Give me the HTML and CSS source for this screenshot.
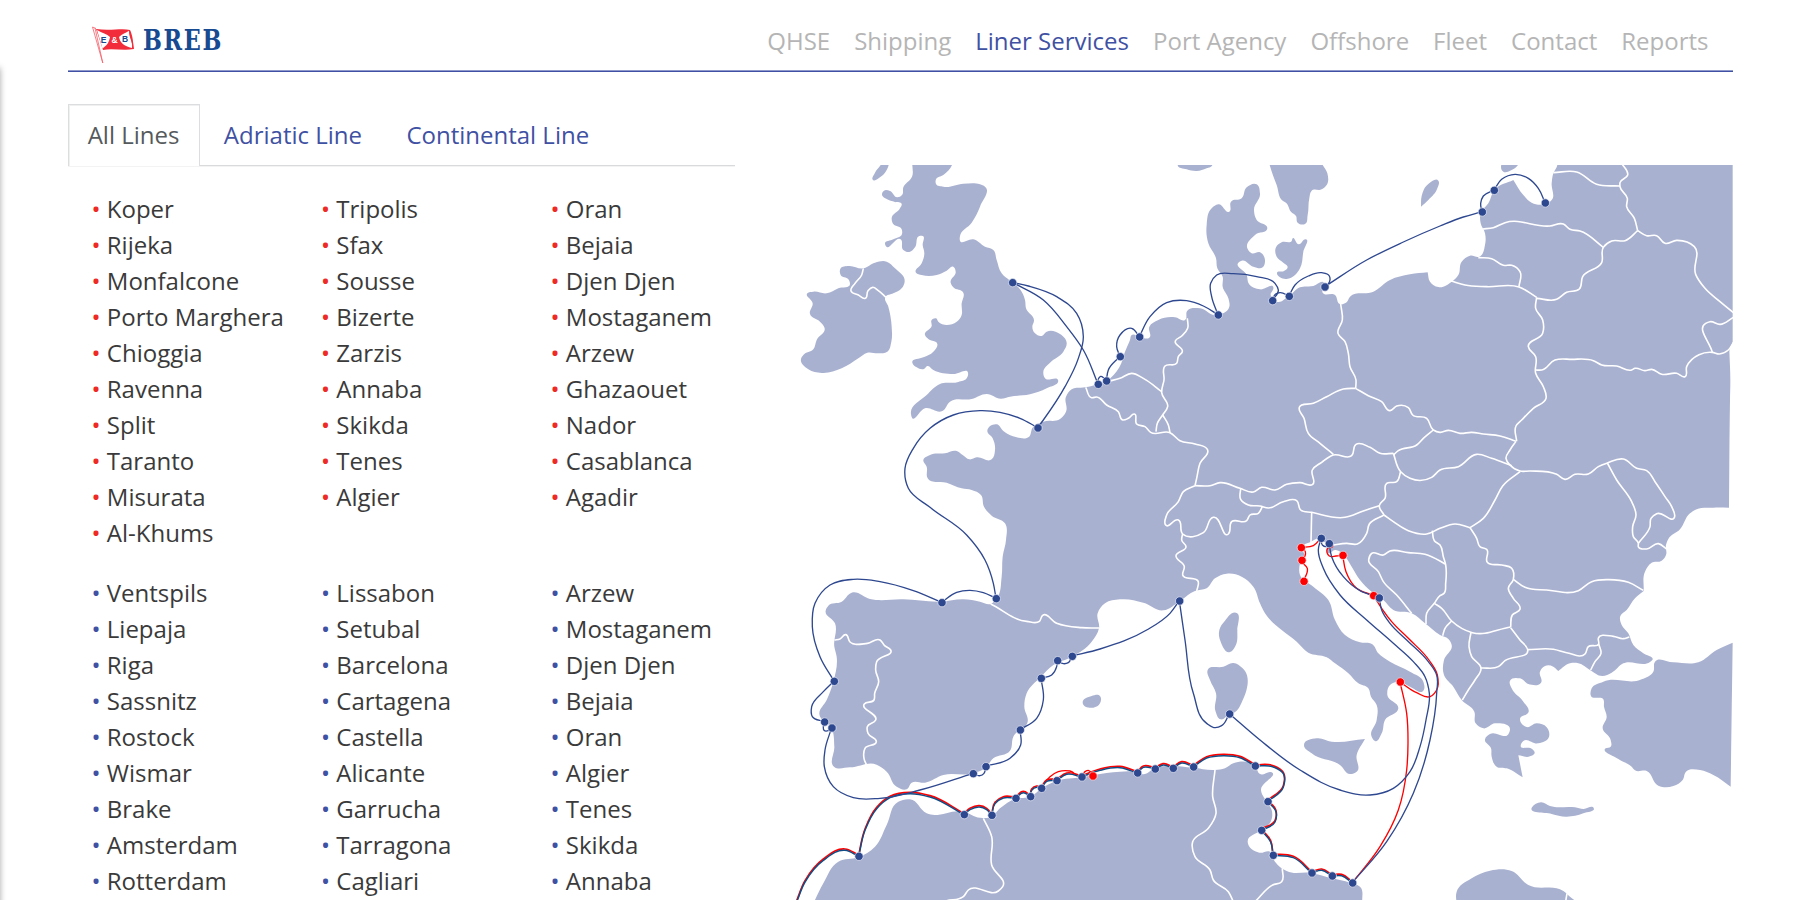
FILE: index.html
```html
<!DOCTYPE html>
<html lang="en">
<head>
<meta charset="utf-8">
<title>BREB – Liner Services</title>
<link rel="stylesheet" href="styles.css">
</head>
<body>
<div class="edge-shadow"></div>
<div class="page">
  <header class="header">
    <a class="logo">
      <svg class="logo-svg" viewBox="0 0 150 40" role="img" aria-label="E and B, BREB">
        <path class="flag-red" d="M4 3C18 5 30 2 38 4C41 10 41 17 42 23C32 25 20 22 11 24Z"/>
        <path class="flag-white" d="M5 4C10 7 15 8 18 11C17 17 15 19 10.500 22.500Z"/>
        <path class="flag-white" d="M37 4.800C34 7 30 8 27 11C28 17 32 20 40 22C41 16 37 12 37 4.800Z"/>
        <path class="flag-line" d="M37.500 4.500C38 11 41 15 41 22.500"/>
        <path class="flag-pole" d="M.500 1L10.800 37M3 2L10.800 37M.500 1L4 2.500"/>
        <text class="flag-text blue" x="8.800" y="16.500">E</text>
        <text class="flag-text white" x="19.500" y="16.500">&amp;</text>
        <text class="flag-text blue" x="30" y="16">B</text>
        <text class="brand" x="51" y="23.500" textLength="80" lengthAdjust="spacingAndGlyphs">BREB</text>
      </svg>
    </a>
    <nav class="nav">
      <a>QHSE</a><a>Shipping</a><a class="current">Liner Services</a><a>Port Agency</a><a>Offshore</a><a>Fleet</a><a>Contact</a><a>Reports</a>
    </nav>
  </header>
  <main class="content">
    <section class="lines">
      <div class="tabs">
        <a class="tab active">All Lines</a><a class="tab">Adriatic Line</a><a class="tab">Continental Line</a>
      </div>
      <div class="ports red">
        <ul><li>Koper</li><li>Rijeka</li><li>Monfalcone</li><li>Porto Marghera</li><li>Chioggia</li><li>Ravenna</li><li>Split</li><li>Taranto</li><li>Misurata</li><li>Al-Khums</li></ul>
        <ul><li>Tripolis</li><li>Sfax</li><li>Sousse</li><li>Bizerte</li><li>Zarzis</li><li>Annaba</li><li>Skikda</li><li>Tenes</li><li>Algier</li></ul>
        <ul><li>Oran</li><li>Bejaia</li><li>Djen Djen</li><li>Mostaganem</li><li>Arzew</li><li>Ghazaouet</li><li>Nador</li><li>Casablanca</li><li>Agadir</li></ul>
      </div>
      <div class="ports blue">
        <ul><li>Ventspils</li><li>Liepaja</li><li>Riga</li><li>Sassnitz</li><li>Rostock</li><li>Wismar</li><li>Brake</li><li>Amsterdam</li><li>Rotterdam</li></ul>
        <ul><li>Lissabon</li><li>Setubal</li><li>Barcelona</li><li>Cartagena</li><li>Castella</li><li>Alicante</li><li>Garrucha</li><li>Tarragona</li><li>Cagliari</li></ul>
        <ul><li>Arzew</li><li>Mostaganem</li><li>Djen Djen</li><li>Bejaia</li><li>Oran</li><li>Algier</li><li>Tenes</li><li>Skikda</li><li>Annaba</li></ul>
      </div>
    </section>
    <svg class="map" viewBox="0 15 2859 2205">
      <g id="land"></g><g id="borders"></g><g id="red-routes"></g><g id="blue-routes"></g><g id="dots"></g>
    </svg>
  </main>
</div>
<script src="map.js"></script>
</body>
</html>
```

FILE: styles.css
```css
* { box-sizing: border-box; }
body { margin: 0; height: 900px; overflow: hidden; background: #fff; color: #3a3a3a; font: 24px/36px "Open Sans", sans-serif; }
.edge-shadow { position: absolute; left: -10px; top: 68px; width: 10px; height: 860px; box-shadow: 0 0 6px rgba(0, 0, 0, .35); }
.page { width: 1665px; margin-left: 67.500px; }
.header { height: 72px; display: flex; justify-content: space-between; border-bottom: 1px solid #4050a4; box-shadow: inset 0 -1px #8f9acb; padding: 0 24px; }
.logo { display: block; padding-top: 26px; }
.logo-svg { display: block; width: 150px; height: 40px; overflow: visible; }
.flag-red { fill: #f22c3a; }
.flag-white { fill: #fff; }
.flag-line { fill: none; stroke: #f22c3a; stroke-width: .8; }
.flag-pole { fill: none; stroke: #f4606a; stroke-width: .8; }
.flag-text { font: bold 8.500px "Liberation Sans", sans-serif; }
.flag-text.blue { fill: #174a90; }
.flag-text.white { fill: #fff; }
.brand { font: bold 27px "DejaVu Serif", serif; fill: #174a90; letter-spacing: 2px; }
.nav { display: flex; gap: 24px; padding-top: 23px; color: #b5b5b5; }
.nav .current { color: #3f51a3; }
.content { display: flex; justify-content: space-between; padding-top: 32px; }
.lines { width: 667px; flex: none; }
.tabs { display: flex; height: 62px; border-bottom: 1px solid #d9dadb; box-shadow: 0 1px #f3f3f3; }
.tab { height: 62px; padding: 12px 19.200px 0; margin-right: 4px; border: 1px solid transparent; border-bottom: 0; color: #3f51a3; }
.tab.active { border-color: #dcddde; box-shadow: inset 0 1px #f0f0f0, inset 1px 0 #f0f0f0; background: #fff; color: #555a5c; }
.ports { display: grid; grid-template-columns: repeat(3, 229.500px); padding: 25px 0 0 24px; }
.ports.blue { padding-top: 24px; }
.ports ul { list-style: none; margin: 0; padding: 0; }
.ports li { white-space: nowrap; }
.ports li::before { content: "•"; display: inline-block; width: 15.300px; }
.red li::before { color: #ee2a24; }
.blue li::before { color: #3f51a3; }
.map { display: block; flex: none; width: 953px; height: 735px; margin-top: 61px; }
.land { fill: #a9b1d0; }
.border { fill: none; stroke: #fff; stroke-width: 4.800; stroke-linejoin: round; }
.route { fill: none; stroke: #2e4890; stroke-width: 4; stroke-linecap: round; }
.route.coast { stroke: #124c84; stroke-width: 4.500; }
.route.red { stroke: #f00; }
.route.red.coast { stroke: #f00; stroke-width: 5; }
.dot { fill: #2e4890; stroke: #eef0f7; stroke-width: 2; }
.dot.red { fill: #f00; }
```

FILE: map.js
```javascript
// Builds a smooth path through "x,y x,y ..." points; a repeated point makes a corner.
function parse(s, dx, dy) {
  return s.trim().split(/\s+/).map(function (p) {
    var a = p.split(',');
    return [+a[0] + (dx || 0), +a[1] + (dy || 0)];
  });
}
function smooth(pts, closed) {
  var n = pts.length, r = function (v) { return v.toFixed(1); };
  var at = function (i) { return closed ? pts[(i + n) % n] : pts[Math.max(0, Math.min(n - 1, i))]; };
  // Tangent at b: the shorter neighbouring segment has the larger weight.
  var tangent = function (a, b, c) {
    var l1 = Math.hypot(b[0] - a[0], b[1] - a[1]), l2 = Math.hypot(c[0] - b[0], c[1] - b[1]);
    var w1 = l1 ? 1 / (l1 * l1) : 0, w2 = l2 ? 1 / (l2 * l2) : 0;
    var x = (b[0] - a[0]) * w1 + (c[0] - b[0]) * w2, y = (b[1] - a[1]) * w1 + (c[1] - b[1]) * w2;
    var d = Math.hypot(x, y) || 1;
    return [x / d, y / d];
  };
  var d = 'M' + pts[0], end = closed ? n : n - 1;
  for (var i = 0; i < end; i++) {
    var p = at(i), q = at(i + 1), len = Math.hypot(q[0] - p[0], q[1] - p[1]) * 0.36;
    if (!len) continue;
    var u = tangent(at(i - 1), p, q), v = tangent(p, q, at(i + 2));
    d += 'C' + r(p[0] + u[0] * len) + ' ' + r(p[1] + u[1] * len) + ' ' + r(q[0] - v[0] * len) + ' ' + r(q[1] - v[1] * len) + ' ' + q[0] + ' ' + q[1];
  }
  return d + (closed ? 'Z' : '');
}
function add(id, tag, attrs) {
  var e = document.createElementNS('http://www.w3.org/2000/svg', tag);
  for (var k in attrs) e.setAttribute(k, attrs[k]);
  document.getElementById(id).appendChild(e);
}
function draw(id, cls, s, closed, dx, dy) {
  add(id, 'path', { 'class': cls, d: smooth(parse(s, dx, dy), closed) });
}

var land = [
  // Great Britain
  '400,0 396,50 370,82 366,105 352,112 330,93 312,92 306,103 320,117 345,126 365,132 360,145 335,175 338,190 365,208 366,222 340,238 315,252 318,259 362,238 370,270 388,276 405,262 418,228 428,228 428,255 433,280 425,310 408,338 425,345 470,345 500,332 520,320 527,335 512,368 520,382 550,398 545,430 543,470 530,485 475,485 468,475 455,480 455,498 435,525 445,537 472,552 460,575 430,592 397,608 410,622 432,627 442,618 460,630 520,642 564,638 560,655 535,666 480,672 440,705 393,762 396,773 435,745 487,753 510,725 575,717 620,702 663,716 690,710 750,703 800,685 834,660 795,655 790,635 810,608 850,575 860,548 840,522 800,515 785,528 765,520 757,500 762,482 738,445 735,420 720,388 690,362 665,340 650,300 640,270 615,260 580,238 540,242 540,228 575,188 600,140 615,80 600,73 550,71 490,80 468,72 468,58 490,45 516,15 520,0',
  '302,15 285,38 279,60 300,52 320,30 326,15 326,0 310,0',
  // Ireland
  '316,412 325,440 335,500 334,545 322,575 295,580 262,578 235,595 185,625 125,639 85,628 63,597 70,585 100,568 110,540 134,505 120,485 90,462 98,430 82,400 100,395 140,400 175,385 210,372 205,358 182,345 182,325 205,318 250,325 285,308 320,305 345,325 374,365 365,385 340,400',
  // Scandinavia and the Baltic islands
  '1193,15 1220,28 1250,33 1280,25 1297,15 1290,0 1200,0',
  '1465,0 1469,15 1490,75 1508,122 1518,128 1533,155 1548,168 1553,188 1575,192 1583,165 1588,115 1595,92 1625,88 1640,75 1642,40 1628,15 1620,0',
  '1923,140 1923,140 1925,108 1945,72 1975,62 1972,85 1945,120',
  '2170,0 2170,35 2195,30 2214,15 2220,0',
  '1538,235 1556,253 1577,238 1570,275 1560,325 1545,345 1520,357 1500,352 1491,338 1512,333 1523,322 1510,308 1490,290 1488,262 1505,247 1535,243',
  // Continental Europe
  '2858,0 2858,0 2858,545 2858,545 2848,572 2848,572 2851,660 2850,720 2847,1043 2847,1043 2800,1043 2745,1050 2730,1060 2700,1108 2665,1137 2658,1155 2658,1185 2645,1202 2615,1208 2595,1235 2591,1293 2591,1293 2565,1315 2540,1350 2521,1368 2525,1395 2545,1420 2560,1455 2590,1480 2617,1500 2610,1506 2530,1510 2495,1538 2467,1548 2430,1530 2395,1510 2370,1510 2335,1533 2335,1533 2320,1520 2295,1518 2280,1535 2283,1568 2245,1572 2220,1555 2190,1562 2195,1585 2230,1625 2246,1655 2220,1678 2240,1701 2270,1690 2300,1702 2307,1730 2275,1750 2230,1743 2222,1758 2255,1766 2264,1778 2250,1789 2215,1786 2215,1786 2228,1852 2228,1852 2180,1825 2150,1820 2135,1790 2133,1765 2115,1738 2130,1722 2185,1723 2190,1708 2145,1690 2110,1705 2087,1690 2083,1655 2045,1620 2020,1580 1992,1545 1992,1500 2015,1455 2005,1437 1980,1425 1935,1390 1895,1360 1840,1350 1810,1320 1775,1295 1740,1260 1715,1220 1695,1190 1665,1170 1645,1180 1637,1150 1622,1136 1590,1147 1563,1165 1572,1180 1560,1210 1560,1245 1600,1280 1645,1320 1665,1380 1695,1425 1740,1447 1777,1453 1795,1480 1830,1505 1890,1535 1930,1565 1930,1592 1890,1580 1858,1565 1830,1575 1822,1605 1855,1645 1815,1680 1805,1720 1785,1743 1775,1730 1790,1680 1790,1635 1773,1610 1765,1585 1735,1570 1705,1540 1665,1510 1640,1492 1585,1478 1550,1445 1505,1410 1455,1360 1440,1330 1420,1280 1385,1250 1340,1241 1305,1255 1280,1285 1245,1293 1200,1323 1150,1351 1090,1328 1020,1318 975,1330 953,1360 957,1405 935,1445 876,1490 820,1515 783,1550 740,1600 733,1640 743,1685 700,1730 690,1772 640,1795 615,1825 580,1840 490,1845 435,1868 395,1868 380,1888 350,1880 320,1835 290,1814 210,1822 162,1820 163,1760 155,1705 118,1662 140,1620 160,1565 170,1490 163,1460 165,1390 137,1352 145,1337 185,1325 215,1298 270,1317 370,1318 485,1325 550,1318 600,1325 632,1332 650,1315 665,1250 668,1190 678,1140 675,1090 635,1067 612,1040 603,1005 575,990 545,985 500,968 443,955 440,920 430,900 450,885 495,880 530,873 548,885 568,898 590,892 635,898 645,870 638,835 622,812 650,793 670,813 710,832 745,832 760,800 790,785 840,777 858,755 858,710 875,688 915,682 955,672 980,662 1018,622 1035,575 1050,540 1055,525 1078,530 1108,533 1108,500 1135,480 1185,472 1215,480 1222,452 1260,445 1305,465 1348,440 1345,415 1328,380 1328,350 1312,325 1308,295 1285,250 1280,195 1295,145 1315,133 1348,155 1353,125 1385,115 1400,82 1430,73 1440,100 1422,150 1430,180 1462,205 1425,225 1402,265 1415,280 1440,277 1455,305 1448,322 1420,320 1385,302 1375,308 1400,345 1407,372 1440,388 1480,382 1472,405 1490,425 1527,408 1560,382 1600,378 1632,368 1628,398 1665,405 1680,432 1698,428 1710,410 1780,395 1830,360 1890,343 1943,337 1943,337 1950,365 1975,381 2015,365 2035,345 2045,305 2070,287 2098,290 2115,255 2115,220 2102,190 2102,160 2125,130 2145,88 2200,60 2200,60 2230,105 2255,128 2295,132 2315,120 2315,70 2320,40 2332,15 2332,0 2332,0',
  // Mediterranean islands
  '1367,1358 1335,1382 1318,1410 1322,1445 1350,1476 1365,1460 1372,1410',
  '1283,1530 1330,1520 1360,1509 1388,1525 1384,1630 1370,1652 1345,1665 1322,1678 1307,1655 1308,1600 1290,1560',
  '1572,1755 1610,1735 1655,1745 1755,1737 1755,1737 1730,1785 1730,1835 1710,1842 1680,1815 1595,1780',
  '908,1628 935,1608 960,1608 960,1630 940,1643',
  '2256,1942 2283,1927 2310,1938 2385,1942 2410,1947 2441,1944 2410,1960 2358,1970 2315,1962',
  // Turkey
  '2858,1448 2858,1448 2810,1470 2755,1507 2680,1507 2625,1505 2620,1535 2585,1558 2470,1565 2435,1585 2433,1608 2470,1618 2472,1640 2480,1670 2468,1705 2492,1740 2492,1760 2477,1765 2515,1797 2555,1820 2565,1831 2600,1833 2635,1877 2680,1878 2708,1860 2718,1835 2760,1830 2800,1845 2852,1880 2852,1880',
  // North Africa
  '100,2230 100,2230 130,2170 175,2105 235,2092 285,2060 320,1995 355,1925 390,1918 440,1960 550,1955 600,1973 635,1970 660,1945 707,1916 751,1910 784,1886 830,1863 905,1852 940,1845 1020,1835 1060,1835 1090,1843 1125,1825 1240,1823 1305,1830 1335,1825 1360,1810 1425,1818 1440,1842 1475,1837 1443,1890 1460,1925 1475,1950 1472,1985 1444,2010 1403,2045 1438,2078 1470,2075 1485,2105 1520,2133 1595,2139 1656,2155 1710,2168 1740,2180 1747,2230 1747,2230',
  '2030,2230 2030,2195 2075,2155 2130,2132 2195,2133 2245,2175 2350,2193 2370,2210 2395,2230'
];
var borders = [
  '250,325 245,345 225,370 213,393 235,405 256,415 264,392 278,382 295,392 318,412',
  '1222,475 1223,505 1205,528 1186,543 1207,575 1195,590 1190,610 1155,618 1152,660 1145,698 1163,740 1148,765 1132,790 1128,815',
  '1148,765 1165,795 1170,818',
  '985,664 1020,655 1055,640 1090,655 1145,695',
  '917,682 935,713 950,711 980,735 1015,755 1028,780 1045,775 1063,762 1070,792 1095,800 1112,817 1170,818 1200,842 1245,852 1283,870 1260,910 1250,955 1245,977',
  '1245,977 1290,977 1320,968 1380,985 1420,996 1445,982 1485,990 1520,973 1560,968 1598,973 1597,930 1625,907 1660,885 1715,887 1728,853 1770,862 1800,880 1840,880',
  '1727,685 1690,687 1640,710 1600,730 1558,742 1572,775 1585,820 1620,850 1660,883',
  '1682,432 1687,480 1674,520 1695,545 1705,580 1710,620 1728,660 1727,685',
  '1727,685 1765,707 1805,725 1830,752 1850,738 1885,743 1898,765 1940,775 1960,810 1980,817 2005,811 2040,820 2075,817 2110,822 2160,828 2208,844',
  '1960,810 1930,835 1910,855 1855,872 1840,885',
  '1840,880 1862,935 1890,955 1955,952 1980,930 2035,920 2090,883 2135,895 2195,917',
  '1862,935 1850,965 1820,970 1815,1015 1798,1037 1812,1065',
  '1382,985 1382,1018 1405,1035 1440,1038 1465,1044 1510,1025 1550,1022 1562,1050 1595,1057 1695,1072 1750,1053 1798,1037',
  '1245,977 1210,995 1195,1025 1160,1065 1157,1095 1195,1080 1208,1122 1270,1118 1300,1072 1345,1122 1355,1085 1400,1082 1410,1065 1435,1060 1447,1040',
  '1208,1122 1205,1140 1218,1160 1188,1187 1213,1220 1208,1245 1255,1265 1250,1293',
  '1595,1057 1593,1147',
  '1655,1156 1700,1150 1732,1152 1760,1120 1768,1092 1812,1065',
  '1812,1065 1840,1085 1885,1112 1940,1122 1980,1105 2025,1092 2070,1103',
  '1957,1112 1963,1142 1980,1155 1990,1190 1997,1215 1997,1270 1992,1300 1980,1307 1963,1330 1940,1360 1938,1392',
  '1995,1212 1980,1203 1935,1183 1885,1178 1830,1173 1810,1185 1775,1180 1766,1200 1795,1235 1810,1265 1850,1305 1895,1360',
  '1963,1330 1985,1345 2015,1383 2077,1418 2192,1401',
  '2015,1383 1995,1405 1988,1427',
  '2073,1417 2067,1460 2075,1490 2103,1525 2085,1560 2065,1590 2047,1620',
  '2192,1403 2220,1440 2243,1469 2175,1502 2155,1520 2103,1524',
  '2243,1469 2320,1468 2360,1478 2415,1482 2425,1460 2456,1452 2455,1435 2500,1429 2530,1436 2548,1431',
  '2456,1452 2463,1480 2445,1505 2432,1530',
  '2070,1103 2090,1135 2100,1160 2120,1168 2122,1207 2165,1215 2195,1225 2200,1258 2185,1285 2200,1315 2220,1348 2197,1365 2192,1401',
  '2200,1258 2235,1282 2300,1290 2395,1292 2435,1265 2485,1259 2545,1267 2590,1291',
  '2220,935 2168,978 2145,1020 2110,1075 2070,1103',
  '2208,844 2190,870 2178,895 2190,915 2220,933 2250,933 2330,943 2355,958 2385,943 2425,942 2455,920 2482,909 2530,897 2570,925 2600,932 2625,965 2655,1010 2675,1040 2683,1073 2630,1061 2613,1075 2610,1100 2575,1150',
  '2482,909 2510,960 2555,1025 2568,1065 2558,1100 2560,1130 2575,1150 2575,1160 2600,1167 2635,1151 2660,1167',
  '2270,412 2267,445 2288,480 2288,520 2245,560 2267,590 2267,640 2290,680 2298,715 2260,745 2225,780 2208,798 2210,844',
  '2267,630 2285,630 2325,600 2375,598 2440,602 2465,615 2510,618 2555,630 2565,625 2595,632 2615,628 2645,643 2690,640 2715,650 2720,620 2757,584 2797,577 2818,582 2845,570 2860,548',
  '2797,577 2777,490 2790,485 2820,493 2860,472',
  '2573,212 2600,227 2630,227 2655,250 2690,241 2743,260 2747,343 2775,385 2820,425 2860,458',
  '2270,415 2330,418 2360,397 2398,387 2408,350 2465,308 2470,262 2495,243 2535,242 2573,212',
  '2108,207 2140,203 2175,188 2310,198 2350,192 2370,208 2400,213 2470,262',
  '2525,10 2543,45 2520,68 2520,80 2542,115 2540,140 2563,175 2573,212',
  '2320,38 2390,36 2450,73 2520,78',
  '2095,293 2135,296 2170,316 2195,316 2220,335 2217,380',
  '2013,363 2055,375 2120,380 2217,381 2270,412',
  '632,1332 740,1384 778,1384 788,1366 830,1390 905,1403 957,1404',
  '163,1440 180,1437 197,1424 210,1446 262,1450 300,1440 313,1456 332,1470 290,1505 287,1530 296,1565 284,1600 282,1620 253,1632 287,1680 262,1700 264,1720 289,1745 255,1765 252,1795 260,1816',
  '610,1975 635,2030 635,2115 668,2180 655,2193 565,2190 550,2210 500,2222',
  '1305,1830 1298,1910 1308,1960 1285,2005 1238,2045 1245,2090 1290,2130 1300,2160 1345,2195 1360,2225',
  '1507,2125 1505,2165 1478,2175 1428,2222',
  '2361,2200 2356,2230'
];
var routes = [
  '697,367 745,378 830,410 890,460 910,530 895,595 855,680 790,780 773,803',
  '697,367 790,420 860,500 910,570 954,672',
  '954,672 956,655 962,649 972,655 979,662', '979,662 985,630 1020,589',
  '1020,589 1010,560 1020,525 1055,505 1078,530',
  '1078,530 1110,470 1160,428 1220,422 1270,438 1314,464',
  '1314,464 1295,410 1292,370 1310,345 1360,341 1430,350 1485,370 1495,390 1477,421',
  '1477,421 1487,402 1500,398 1527,408',
  '1527,408 1545,375 1585,348 1625,338 1648,348 1646,370 1634,380',
  '1634,380 1760,300 1870,246 1980,198 2050,171 2106,155',
  '2106,155 2102,130 2110,108 2142,90', '2142,90 2165,58 2205,43 2245,55 2275,85 2295,128',
  '773,803 720,775 660,757 600,752 520,765 450,805 400,865 375,925 385,985 450,1042 560,1125 615,1200 640,1270 648,1315',
  '648,1315 610,1298 570,1291 530,1297 485,1327',
  '485,1327 400,1292 300,1265 220,1258 150,1275 105,1330 97,1400 120,1490 162,1563',
  '162,1563 130,1595 95,1640 97,1670 133,1685', '133,1685 130,1700 132,1711 145,1712 155,1703',
  '155,1703 135,1770 133,1820 160,1880 220,1913 300,1915 420,1890 579,1840',
  '579,1840 600,1847 612,1840 617,1819', '617,1819 690,1795 722,1755 720,1709',
  '720,1709 770,1675 790,1620 783,1554', '783,1554 815,1545 830,1520 832,1501',
  '832,1501 850,1511 865,1508 876,1488', '876,1488 960,1467 1100,1410 1170,1360 1198,1322',
  '1198,1322 1215,1440 1240,1600 1280,1690 1306,1703 1325,1697 1348,1661',
  '1348,1661 1440,1740 1560,1830 1680,1890 1770,1905 1840,1885 1890,1835 1920,1760 1938,1680 1948,1600 1935,1550 1900,1505 1840,1450 1760,1380 1680,1305 1630,1225 1615,1170 1623,1134',
  '1647,1150 1655,1190 1690,1250 1740,1292 1797,1312',
  '1798,1314 1805,1350 1830,1390 1880,1440 1945,1505 1970,1545 1970,1600 1950,1740 1900,1900 1820,2045 1717,2168',
  '1623,1134 1627,1155 1637,1160 1647,1150'
];
var redRoutes = [
  '1780,1306 1807,1348 1835,1385 1885,1435 1949,1503 1972,1545 1970,1590 1950,1610 1910,1598 1860,1566',
  '1860,1566 1880,1660 1884,1750 1880,1830 1855,1950 1800,2060 1717,2168',
  '1688,1185 1698,1235 1730,1285 1780,1306', '1688,1185 1668,1188 1648,1188 1643,1165 1657,1160 1658,1155',
  '1563,1162 1600,1157 1623,1134', '1563,1162 1576,1175 1575,1188 1565,1200 1582,1225 1571,1263',
  '784,1883 810,1850 835,1835 870,1833 905,1850 915,1835 925,1831 938,1847'
];
var coast = [
  '50,2225 75,2165 130,2100 195,2070 236,2088', '236,2088 255,2010 290,1945 330,1912 390,1900 450,1910 552,1963',
  '552,1963 570,1948 598,1940 620,1948 635,1965', '635,1965 645,1930 670,1913 707,1914',
  '707,1914 730,1897 751,1909', '751,1909 755,1890 770,1881 784,1884', '784,1884 800,1863 830,1861', '830,1861 860,1842 905,1850',
  '905,1850 960,1830 1020,1822 1072,1838', '1072,1838 1090,1821 1125,1826', '1125,1826 1150,1814 1179,1824',
  '1179,1824 1205,1808 1240,1820', '1240,1820 1280,1793 1330,1786 1380,1792 1425,1817',
  '1425,1817 1480,1820 1510,1840 1510,1880 1463,1924', '1463,1924 1488,1955 1485,1985 1444,2010',
  '1444,2010 1472,2045 1479,2085', '1479,2085 1540,2092 1595,2138', '1595,2138 1625,2130 1656,2147', '1656,2147 1685,2146 1717,2168'
];
var blueDots = '697,367 954,672 979,662 1020,589 1078,530 1314,464 1477,421 1527,408 1634,380 2106,155 2142,90 2295,128 773,803 648,1315 485,1327 162,1563 133,1685 155,1703 579,1840 617,1819 720,1709 783,1554 832,1501 876,1488 1198,1322 1348,1661 1623,1134 1647,1150 1797,1313 236,2088 552,1963 635,1965 707,1914 751,1909 784,1884 830,1861 905,1850 1072,1838 1125,1826 1179,1824 1240,1820 1425,1817 1463,1924 1444,2010 1479,2085 1595,2138 1656,2147 1717,2168';
var redDots = '1563,1162 1565,1200 1571,1263 1688,1185 1780,1306 1860,1565 938,1847';

land.forEach(function (s) { draw('land', 'land', s, true); });
borders.forEach(function (s) { draw('borders', 'border', s); });
redRoutes.forEach(function (s) { draw('red-routes', 'route red', s); });
coast.forEach(function (s) { draw('red-routes', 'route red coast', s, false, 0, -3); });
coast.forEach(function (s) { draw('blue-routes', 'route coast', s, false, 0, 1); });
routes.forEach(function (s) { draw('blue-routes', 'route', s); });
parse(redDots).forEach(function (p) { add('dots', 'circle', { 'class': 'dot red', cx: p[0] + 1, cy: p[1] + 1, r: 12.5 }); });
parse(blueDots).forEach(function (p) { add('dots', 'circle', { 'class': 'dot', cx: p[0] + 1, cy: p[1] + 1, r: 12.5 }); });
```
